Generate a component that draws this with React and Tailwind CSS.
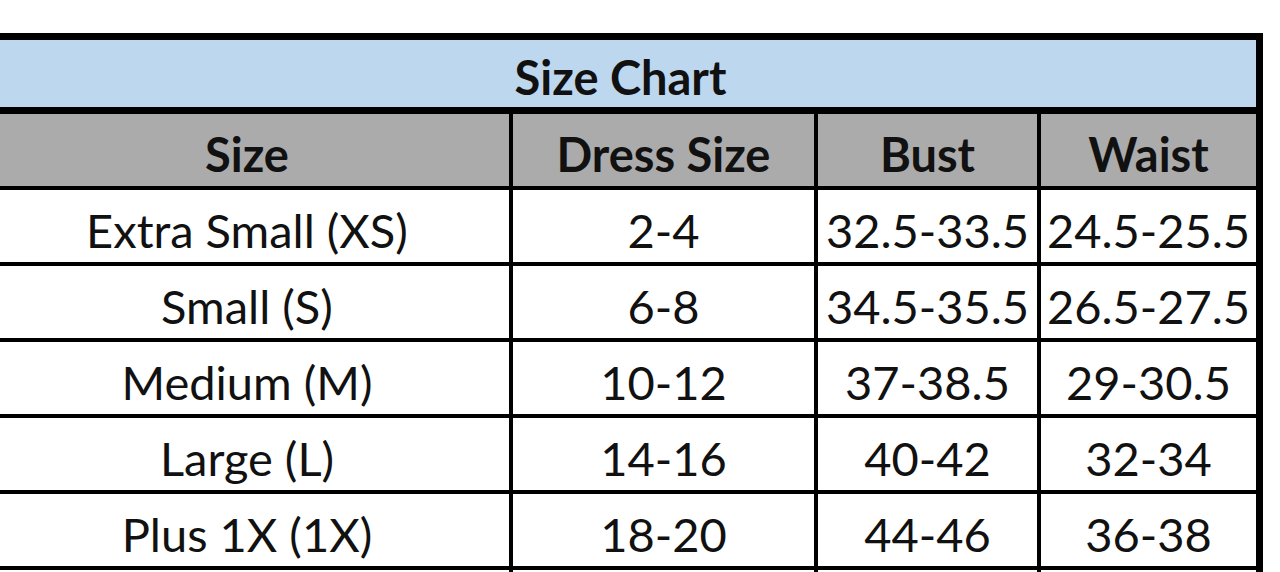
import React from "react";

const rows = [
  ["Extra Small (XS)", "2-4", "32.5-33.5", "24.5-25.5"],
  ["Small (S)", "6-8", "34.5-35.5", "26.5-27.5"],
  ["Medium (M)", "10-12", "37-38.5", "29-30.5"],
  ["Large (L)", "14-16", "40-42", "32-34"],
  ["Plus 1X (1X)", "18-20", "44-46", "36-38"],
  ["", "", "", ""],
];

const font = { fontFamily: "Lato, 'Open Sans', sans-serif" };

function Row({ cells, header }) {
  const base = header
    ? "bg-[#ababab] font-bold h-[72px] text-[47px]"
    : "bg-white h-[72px] text-[47px]";
  return (
    <div className="grid grid-cols-[524px_4px_301px_4px_219px_4px_215px]">
      <div className={`${base} flex items-center justify-center pt-[8px] whitespace-nowrap`}>{cells[0]}</div>
      <div className="bg-black" />
      <div className={`${base} flex items-center justify-center pt-[8px] whitespace-nowrap`}>{cells[1]}</div>
      <div className="bg-black" />
      <div className={`${base} flex items-center justify-center pt-[8px] whitespace-nowrap`}>{cells[2]}</div>
      <div className="bg-black" />
      <div className={`${base} flex items-center justify-center pt-[8px] whitespace-nowrap`}>{cells[3]}</div>
    </div>
  );
}

export default function App() {
  return (
    <div className="w-[1280px] h-[572px] overflow-hidden bg-white pt-[33px]" style={font}>
      <div className="ml-[-19px] w-[1282px] border-t-[7px] border-l-[4px] border-r-[7px] border-black text-[#111]">
        <div className="h-[67px] bg-[#bdd7ee] flex items-center justify-center font-bold text-[47px] pt-[8px]">
          Size Chart
        </div>
        <div className="h-[7px] bg-black" />
        <Row cells={["Size", "Dress Size", "Bust", "Waist"]} header />
        {rows.map((r, i) => (
          <div key={i}>
            <div className="h-[4px] bg-black" />
            <Row cells={r} />
          </div>
        ))}
      </div>
    </div>
  );
}
